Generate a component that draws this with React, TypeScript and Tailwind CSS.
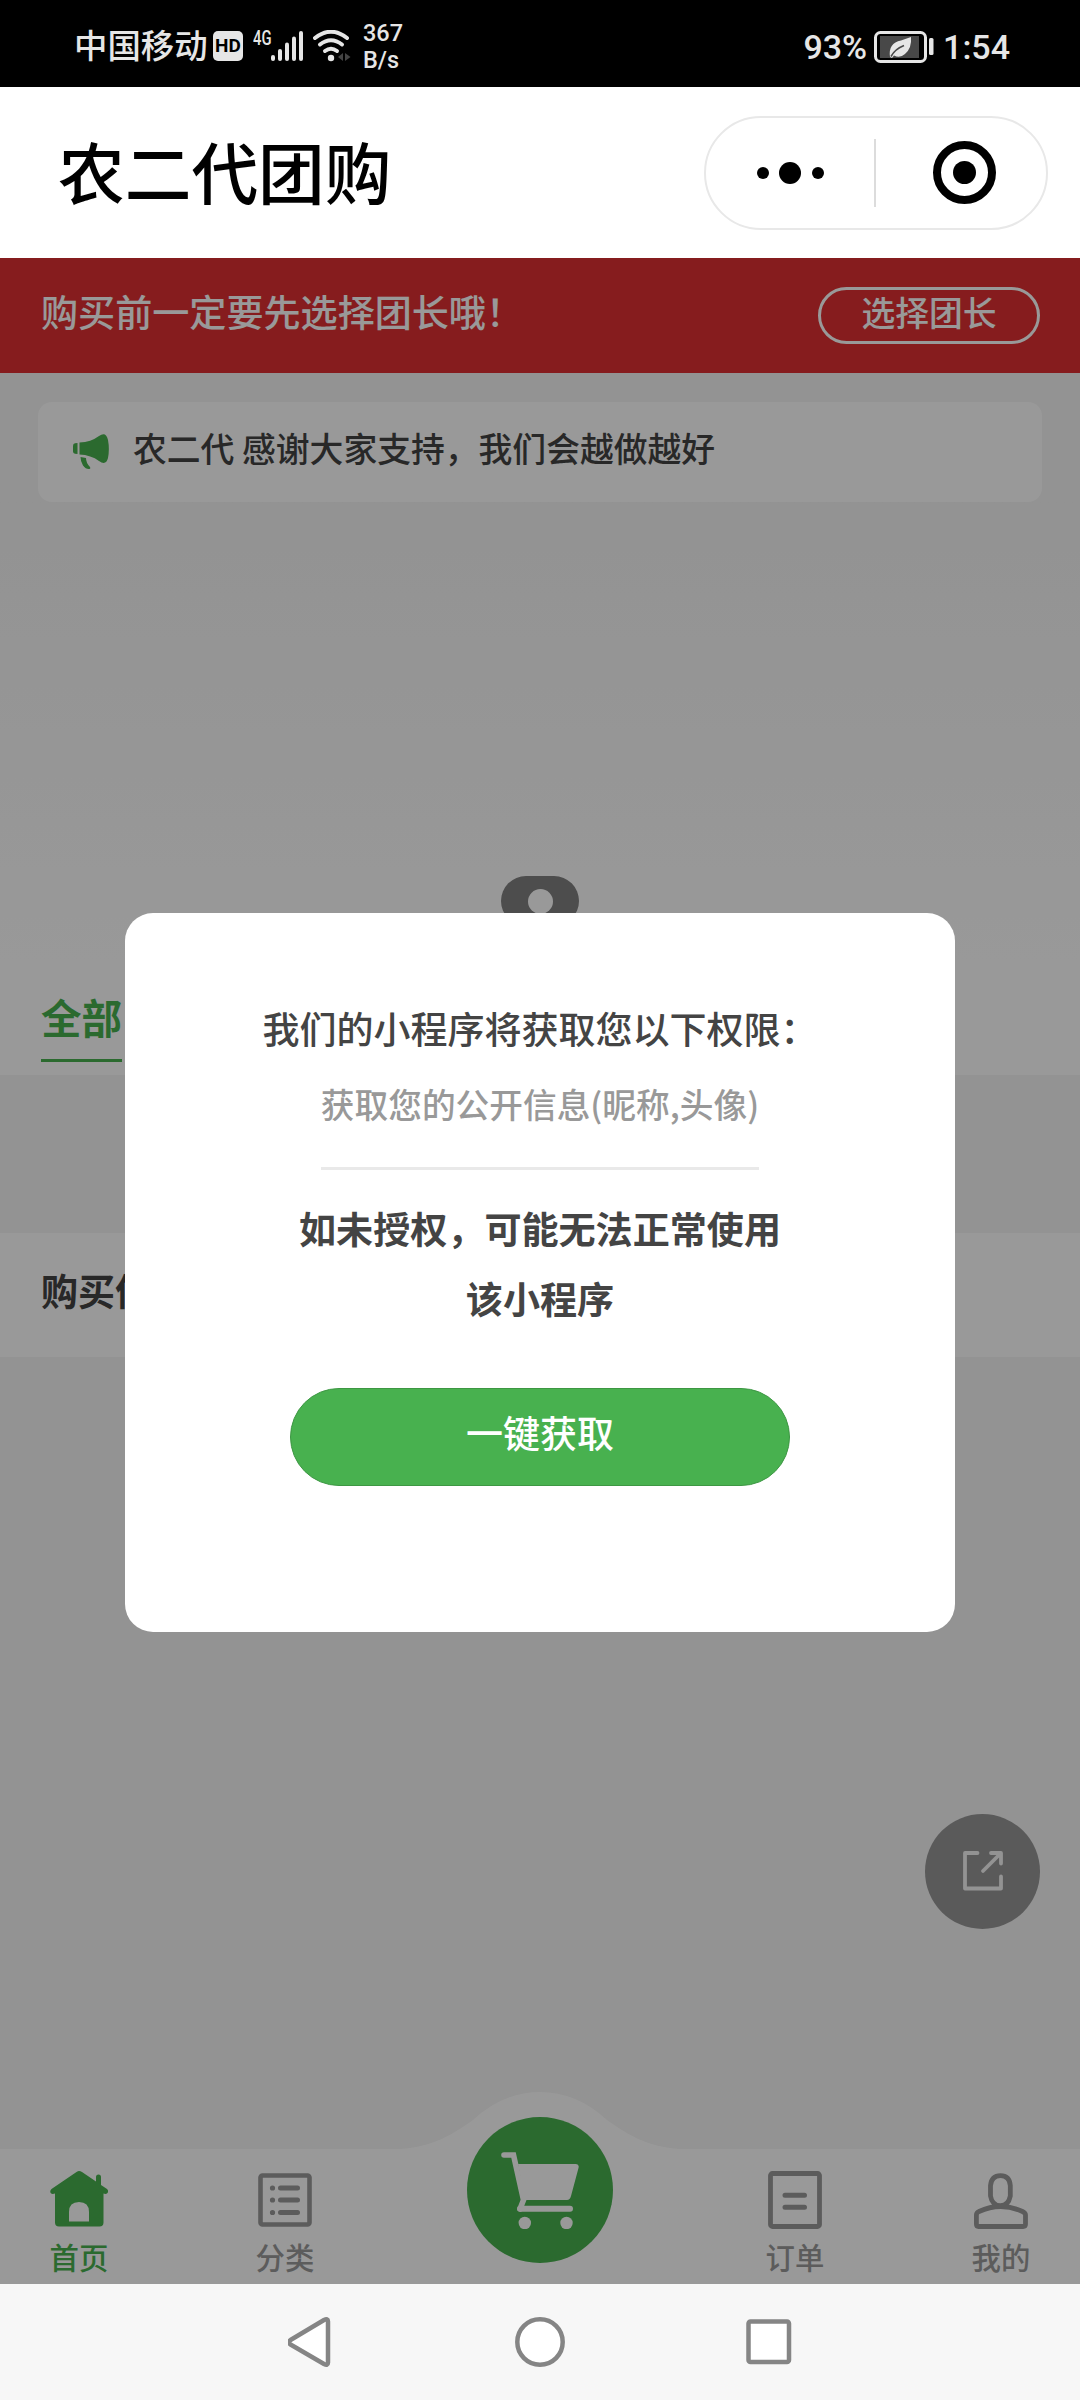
import type { ReactNode } from "react";

const HomeIcon = () => (
  <svg viewBox="0 0 58 56" className="w-[58px] h-[56px]" fill="currentColor">
    <path d="M29 0 Q30.500 0 32 1 L46 10.500 V6 Q46 3.500 48.500 3.500 Q51 3.500 51 6 V14 L57 18 Q59 20 57.500 22 Q56 23.500 53.500 22.500 V51.500 Q53.500 55.500 49.500 55.500 H9 Q5 55.500 5 51.500 V22.500 Q2 23.500 .7 22 Q-.5 20 1.500 18 L26.500 1 Q28 0 29 0 Z M19 50.500 H39 V41 Q39 31 29 31 Q19 31 19 41 Z" fillRule="evenodd" />
  </svg>
);

const ListIcon = () => (
  <svg viewBox="0 0 54 56" className="w-[54px] h-[56px]" fill="none" stroke="currentColor" strokeLinecap="round">
    <rect x="2.500" y="4.500" width="49" height="49" rx="2" strokeWidth="4.600" />
    <path d="M22.500 17 H39.500 M22.500 29 H39.500 M22.500 41.500 H39.500" strokeWidth="5" />
    <path d="M14.500 17 h.01 M14.500 29 h.01 M14.500 41.500 h.01" strokeWidth="5.200" />
  </svg>
);

const OrderIcon = () => (
  <svg viewBox="0 0 54 58" className="w-[54px] h-[58px]" fill="none" stroke="currentColor" strokeLinecap="round">
    <rect x="2.500" y="2.500" width="49" height="53" rx="2" strokeWidth="4.800" />
    <path d="M17 24.300 H36.500 M17 36.300 H36.500" strokeWidth="5" />
  </svg>
);

const UserIcon = () => (
  <svg viewBox="0 0 54 58" className="w-[54px] h-[58px]" fill="none" stroke="currentColor" strokeWidth="4.800">
    <path d="M16.500 14.500 Q17.500 4.700 26.500 4.700 Q35.500 4.700 36.300 14.500 V25 Q34.500 34.500 26.500 34.700 Q18 34.500 16.500 25 Z" />
    <path d="M4.500 55.500 Q2.400 55.500 2.400 53 V44 Q2.500 41.500 5 40.500 Q26.500 30.500 48.500 40.500 Q51.500 42 51.500 44 V53 Q51.500 55.500 49 55.500 Z" />
  </svg>
);

const CartIcon = () => (
  <svg viewBox="0 0 78 77" className="w-[78px] h-[77px]" fill="none" stroke="#fff" strokeLinecap="round">
    <path d="M3 3 H12.500 L22.500 48 L19 57" strokeWidth="5.600" />
    <path d="M17 12 H75 Q78.500 12.500 77.500 16 L70 44 Q69 48 66 48 H24 Z" fill="#fff" stroke="none" />
    <path d="M19 56.800 H69" strokeWidth="6" />
    <circle cx="23.800" cy="71" r="6.200" fill="#fff" stroke="none" />
    <circle cx="65.500" cy="71" r="6.200" fill="#fff" stroke="none" />
  </svg>
);

const MegaphoneIcon = () => (
  <svg viewBox="0 0 36 36" className="w-[36px] h-[36px]" fill="#48b14f">
    <path d="M0 12 Q0 9.500 2 9.300 L4.500 9 V20 L2 19.700 Q0 19.500 0 17.500 Z" />
    <path d="M6.500 8.500 Q18 8 26 2 Q33 -3 35 6 Q36.700 15 35 24 Q33 32 26 27 Q18 21 6.500 20.500 Z" />
    <path d="M7.500 23 L13 24 Q13 29 17 33 Q18 34.500 16.500 35 Q13 35.500 10 31.500 Q7.500 27.500 7.500 23 Z" />
  </svg>
);

type Tab = { label: string; icon: ReactNode; active?: boolean };

const leftTabs: Tab[] = [
  { label: "首页", icon: <HomeIcon />, active: true },
  { label: "分类", icon: <ListIcon /> },
];

const rightTabs: Tab[] = [
  { label: "订单", icon: <OrderIcon /> },
  { label: "我的", icon: <UserIcon /> },
];

function StatusBar() {
  return (
    <div className="flex h-[87px] items-center justify-between bg-black pl-[74px] pr-[70px] text-[#e6e6e6]">
      <div className="flex items-center">
        <span className="w-[134px] text-[33.4px] leading-[50px] font-medium whitespace-nowrap">中国移动</span>
        <span className="ml-[5px] mt-[5px] flex h-[30px] w-[30px] items-center justify-center rounded-[5px] bg-[#e6e6e6] font-[Roboto] text-[19px] leading-[30px] font-bold text-black">
          HD
        </span>
        <span className="ml-[10px] mb-[4px] h-[32px] w-[18px] origin-left scale-x-[0.74] font-[Roboto] text-[20px] leading-[24px] font-medium">
          4G
        </span>
        <svg viewBox="0 0 33 32" className="mt-[5px] h-[32px] w-[33px]" fill="#e6e6e6">
          <rect x="0" y="25" width="4" height="6" rx="2" />
          <rect x="7" y="19" width="4" height="12" rx="2" />
          <rect x="14" y="12.500" width="4" height="18.500" rx="2" />
          <rect x="21" y="6.500" width="4" height="24.500" rx="2" />
          <rect x="28" y="1" width="4" height="30" rx="2" />
        </svg>
        <svg viewBox="0 0 38 32" className="ml-[9px] mt-[5px] h-[32px] w-[38px]" fill="none" stroke="#e6e6e6" strokeWidth="4" strokeLinecap="round">
          <path d="M2 8 Q18 -4.500 34 8" />
          <path d="M7 14.500 Q18 6 29 14.500" />
          <path d="M12 21 Q18 16.500 24 21" />
          <circle cx="18" cy="28" r="3.200" fill="#e6e6e6" stroke="none" />
          <path d="M30 23 V31 L25 27 Z M32 23 V31 L37.500 27 Z" fill="#444" stroke="none" />
        </svg>
        <div className="ml-[12px] mt-[6px] flex flex-col font-[Roboto] text-[23.5px] leading-[27px] font-medium">
          <span>367</span>
          <span>B/s</span>
        </div>
      </div>
      <div className="flex items-center pt-[6px] font-[Roboto] text-[34px] leading-[40px] font-medium">
        <span>93%</span>
        <svg viewBox="0 0 60 32" className="ml-[7px] h-[32px] w-[60px]">
          <rect x="1.500" y="1.500" width="50" height="29" rx="5" fill="none" stroke="#e6e6e6" strokeWidth="3" />
          <rect x="6" y="5" width="39" height="22" fill="#484848" />
          <path d="M16 26 Q14 12 27 9.500 L37 6 Q38 17 31 23 Q26 27.500 20 24.500 L18 27 Z" fill="#e6e6e6" />
          <path d="M17 25.500 Q21 18 30 14.500" fill="none" stroke="#484848" strokeWidth="1.600" />
          <rect x="55" y="7" width="4.500" height="17" rx="1.500" fill="#e6e6e6" />
        </svg>
        <span className="ml-[9px]">1:54</span>
      </div>
    </div>
  );
}

function TitleBar() {
  return (
    <div className="flex h-[171px] items-center justify-between bg-white pl-[58px] pr-8">
      <h1 className="pb-[5px] text-[66.7px] leading-[80px] font-medium text-black">农二代团购</h1>
      <div className="flex h-[114px] w-[344px] items-center rounded-full border-2 border-[#e8e8e8]">
        <div className="flex w-[168px] items-center justify-center gap-[10.5px]">
          <span className="h-3 w-3 rounded-full bg-black" />
          <span className="h-[22px] w-[22px] rounded-full bg-black" />
          <span className="h-3 w-3 rounded-full bg-black" />
        </div>
        <div className="h-[68px] w-[2px] bg-[#dcdcdc]" />
        <div className="ml-[57px] flex h-[63px] w-[63px] items-center justify-center rounded-full border-8 border-black">
          <span className="h-[23px] w-[23px] rounded-full bg-black" />
        </div>
      </div>
    </div>
  );
}

function TabGroup({ tabs }: { tabs: Tab[] }) {
  return (
    <div className="flex gap-[148px]">
      {tabs.map((tab) => (
        <div
          key={tab.label}
          className={`flex w-[58px] flex-col items-center pt-[22px] ${tab.active ? "text-[#48b14f]" : "text-[#999]"}`}
        >
          <div className="h-[58px]">{tab.icon}</div>
          <span className="mt-[7px] text-[29.4px] leading-[40px] font-medium whitespace-nowrap">{tab.label}</span>
        </div>
      ))}
    </div>
  );
}

function TabBar() {
  return (
    <div className="relative mt-auto h-[135px] shrink-0 bg-white">
      <svg viewBox="0 0 310 60" className="absolute -top-[57px] left-[385px] h-[60px] w-[310px]" fill="#fff">
        <path d="M0 57.500 C45 57.500 65 44 88 28 Q118 0 155 0 Q192 0 222 28 C245 44 265 57.500 310 57.500 V60 H0 Z" />
      </svg>
      <div className="flex h-full justify-between px-[50px]">
        <TabGroup tabs={leftTabs} />
        <TabGroup tabs={rightTabs} />
      </div>
      <div className="absolute -top-[32px] left-[467px] flex h-[146px] w-[146px] items-center justify-center rounded-full bg-[#48b14f]">
        <CartIcon />
      </div>
    </div>
  );
}

function AuthModal() {
  return (
    <div className="absolute inset-0 flex items-start justify-center bg-black/40 pt-[655px]">
      <div className="flex h-[719px] w-[830px] flex-col items-center rounded-[28px] bg-white pt-[87px] text-[#444]">
        <p className="text-[37px] leading-[56px] font-medium">我们的小程序将获取您以下权限：</p>
        <p className="mt-[20px] border-b-[3px] border-[#e9e9e9] pb-[35px] text-[33.7px] leading-[56px] font-medium text-[#999]">
          获取您的公开信息(昵称,头像)
        </p>
        <p className="mt-[23px] w-[490px] text-center text-[37.1px] leading-[70px] font-bold">
          如未授权，可能无法正常使用该小程序
        </p>
        <button className="mt-[55px] flex h-[98px] w-[500px] items-center justify-center rounded-full border border-[#3d9743] bg-[#48b14f] pb-[8px] text-[37px] font-medium text-white">
          一键获取
        </button>
      </div>
    </div>
  );
}

function NavBar() {
  return (
    <div className="flex h-[116px] items-center justify-center bg-[#f7f7f7] text-[#858585]">
      <svg viewBox="0 0 504 52" className="h-[52px] w-[504px]" fill="#fff" stroke="currentColor" strokeWidth="4.500" strokeLinejoin="round">
        <path d="M2.500 24 L36 4 Q40 2 40 5.500 V46.500 Q40 50 36 48 L2.500 28.500 Q-.5 26 2.500 24 Z" />
        <circle cx="252" cy="26" r="22.700" />
        <rect x="460.500" y="5.500" width="40.500" height="40.500" rx="2" />
      </svg>
    </div>
  );
}

export default function App() {
  return (
    <div className="h-[2400px] w-[1080px] overflow-hidden bg-white font-['Noto_Sans_CJK_SC',sans-serif]">
      <StatusBar />
      <TitleBar />
      <div className="relative flex h-[2026px] flex-col overflow-hidden bg-[#f5f5f5] text-[#444]">
        {/* Pick a group leader */}
        <div className="flex h-[115px] items-center justify-between bg-[#df3032] pl-[41px] pr-10 text-white">
          <span className="pb-[10px] text-[37.1px] leading-[50px] font-medium">购买前一定要先选择团长哦！</span>
          <span className="flex h-[57px] w-[222px] items-center justify-center rounded-full border-[3px] border-white pb-[8px] text-[33.8px] leading-none font-medium">
            选择团长
          </span>
        </div>

        {/* Notice */}
        <div className="mx-[38px] mt-[29px] flex h-[100px] items-center rounded-[14px] bg-white pl-[35px]">
          <MegaphoneIcon />
          <span className="ml-[24px] pb-[8px] text-[33.8px] leading-[50px] font-medium">
            农二代 感谢大家支持，我们会越做越好
          </span>
        </div>

        {/* Banner and category tabs */}
        <div className="flex h-[573px] flex-col items-start bg-linear-to-b from-[#f5f5f5] to-white to-80% pt-[374px] pl-[41px]">
          <div className="ml-[460px] flex h-[50px] w-[78px] items-center justify-center rounded-full bg-[#808080]">
            <span className="h-[25px] w-[25px] rounded-full bg-white" />
          </div>
          <span className="mt-[61px] h-[75px] border-b-[3px] border-[#48b14f] text-[40.5px] leading-[60px] font-bold text-[#48b14f]">
            全部
          </span>
        </div>

        <div className="mt-[158px] flex h-[124px] items-center bg-white pb-[8px] pl-[41px] text-[37px] font-bold">购买件</div>

        <div className="absolute top-[1556px] left-[925px] flex h-[115px] w-[115px] items-center justify-center rounded-full bg-[#969696] pb-[2px]">
          <svg viewBox="0 0 40 40" className="h-10 w-10" fill="none" stroke="#f5f5f5" strokeWidth="3.800" strokeLinecap="round" strokeLinejoin="round">
            <path d="M14.500 2 H2 V37.500 H38 V25.500" />
            <path d="M28 2 H38 V12.500 M37 3 L20 20" />
          </svg>
        </div>

        <TabBar />
        <AuthModal />
      </div>
      <NavBar />
    </div>
  );
}
